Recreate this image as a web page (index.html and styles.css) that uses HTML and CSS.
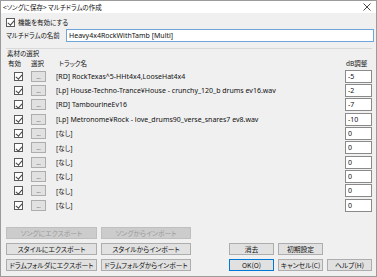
FILE: index.html
```html
<!DOCTYPE html>
<html lang="ja">
<head>
    <meta charset="UTF-8">
    <title>マルチドラムの作成</title>
    <link rel="stylesheet" href="styles.css">
</head>
<body>
<div class="window">
    <div class="titlebar">
        <span class="ja">&lt;ソングに保存&gt; マルチドラムの作成</span>
        <svg class="close" width="8" height="8" viewBox="0 0 8 8"><path d="M0.5 0.5L7.5 7.5M7.5 0.5L0.5 7.5" stroke="#333" stroke-width="0.9"/></svg>
    </div>

    <div class="content">
        <div class="enable-row">
            <span class="check"></span>
            <span class="ja">機能を有効にする</span>
        </div>

        <div class="name-row">
            <span class="ja name-label">マルチドラムの名前</span>
            <input class="name-input" type="text" value="Heavy4x4RockWithTamb [Multi]">
        </div>

        <div class="group">
            <div class="group-title ja">素材の選択</div>

            <div class="track-head">
                <span class="ja head-use">有効</span>
                <span class="ja">選択</span>
                <span class="ja head-name">トラック名</span>
                <span class="ja head-db">dB調整</span>
            </div>

            <div class="tracks">
                <div class="track"><span class="check"></span><button class="pick">...</button><span class="track-name">[RD] RockTexas^5-HHt4x4,LooseHat4x4</span><input class="db" type="text" value="-5"></div>
                <div class="track"><span class="check"></span><button class="pick">...</button><span class="track-name">[Lp] House-Techno-Trance¥House - crunchy_120_b drums ev16.wav</span><input class="db" type="text" value="-2"></div>
                <div class="track"><span class="check"></span><button class="pick">...</button><span class="track-name">[RD] TambourineEv16</span><input class="db" type="text" value="-7"></div>
                <div class="track"><span class="check"></span><button class="pick">...</button><span class="track-name">[Lp] Metronome¥Rock - love_drums90_verse_snares7 ev8.wav</span><input class="db" type="text" value="-10"></div>
                <div class="track"><span class="check"></span><button class="pick">...</button><span class="track-name">[<span class="ja">なし</span>]</span><input class="db" type="text" value="0"></div>
                <div class="track"><span class="check"></span><button class="pick">...</button><span class="track-name">[<span class="ja">なし</span>]</span><input class="db" type="text" value="0"></div>
                <div class="track"><span class="check"></span><button class="pick">...</button><span class="track-name">[<span class="ja">なし</span>]</span><input class="db" type="text" value="0"></div>
                <div class="track"><span class="check"></span><button class="pick">...</button><span class="track-name">[<span class="ja">なし</span>]</span><input class="db" type="text" value="0"></div>
                <div class="track"><span class="check"></span><button class="pick">...</button><span class="track-name">[<span class="ja">なし</span>]</span><input class="db" type="text" value="0"></div>
                <div class="track"><span class="check"></span><button class="pick">...</button><span class="track-name">[<span class="ja">なし</span>]</span><input class="db" type="text" value="0"></div>
            </div>
        </div>

        <div class="actions">
            <button class="btn" disabled>ソングにエクスポート</button>
            <button class="btn" disabled>ソングからインポート</button>
            <span></span><span></span><span></span><span></span>

            <button class="btn">スタイルにエクスポート</button>
            <button class="btn">スタイルからインポート</button>
            <span></span>
            <button class="btn">消去</button>
            <button class="btn">初期設定</button>
            <span></span>

            <button class="btn">ドラムフォルダにエクスポート</button>
            <button class="btn">ドラムフォルダからインポート</button>
            <span></span>
            <button class="btn btn-default">OK(O)</button>
            <button class="btn">キャンセル(C)</button>
            <button class="btn">ヘルプ(H)</button>
        </div>
    </div>
</div>
</body>
</html>
```

FILE: styles.css
```css
/* Reset */
* {
  box-sizing: border-box;
  margin: 0;
  padding: 0;
}

body {
  font-family: "Noto Sans", "Noto Sans CJK JP", sans-serif;
  font-size: 7px;
  color: #111;
  background: #fff;
}

.ja {
  font-family: "Noto Sans CJK JP", sans-serif;
  font-size: 6.5px;
  font-feature-settings: "palt";
}

/* Dialog window */
.window {
  width: 377px;
  height: 277px;
  border: 1px solid #9b9b9b;
  background: #f0f0f0;
}

.titlebar {
  height: 12px;
  background: #fff;
  display: flex;
  align-items: center;
  justify-content: space-between;
  padding: 0 5px 0 2px;
  line-height: 12px;
}

.content {
  padding: 0 4px 0 5px;
}

/* Checkbox */
.check {
  position: relative;
  display: inline-block;
  width: 9px;
  height: 9px;
  border: 1px solid #5a5a5a;
  background: #fff;
  flex-shrink: 0;
}

.check::after {
  content: "";
  position: absolute;
  left: 2.3px;
  top: 0.4px;
  width: 2.5px;
  height: 5px;
  border: solid #444;
  border-width: 0 0.8px 0.8px 0;
  transform: rotate(40deg);
}

.enable-row {
  margin-top: 5px;
  height: 9px;
  display: flex;
  align-items: center;
  gap: 3px;
  line-height: 9px;
}

/* Name */
.name-row {
  margin-top: 2px;
  display: flex;
  align-items: center;
}

.name-label {
  width: 60px;
  line-height: 13px;
}

.name-input {
  flex: 1;
  height: 13px;
  margin-right: -2px;
  border: 1px solid #6ea6dc;
  background: #fff;
  padding: 0 2px;
  font-family: "Noto Sans", sans-serif;
  font-size: 7px;
  color: #111;
  outline: none;
}

/* Group */
.group {
  margin-top: 6px;
  border-top: 1px solid #d9d9d9;
}

.group-title {
  line-height: 8px;
  padding-left: 1px;
}

.track-head,
.track {
  display: grid;
  grid-template-columns: 25px 25px 1fr 27px;
  align-items: center;
}

.track-head {
  margin-top: 2px;
  line-height: 8px;
}

.head-use {
  padding-left: 2px;
}

.head-name {
  padding-left: 3px;
}

.head-db {
  padding-left: 1px;
}

.tracks {
  margin-top: 2px;
}

.track {
  height: 14.33px;
}

.track .check {
  margin-left: 8px;
}

.pick {
  width: 15px;
  height: 11px;
  border: 1px solid #adadad;
  background: #e1e1e1;
  font-family: "Noto Sans", sans-serif;
  font-size: 5px;
  line-height: 11px;
  color: #333;
}

.track-name {
  white-space: nowrap;
  overflow: hidden;
}

.db {
  width: 27px;
  height: 13px;
  border: 1px solid #8a8a8a;
  background: #fff;
  padding: 0 2px;
  font-family: "Noto Sans", sans-serif;
  font-size: 7px;
  color: #111;
  outline: none;
}

/* Buttons */
.actions {
  margin-top: 15px;
  display: grid;
  grid-template-columns: 91px 90px 30px 45px 45px 45px;
  grid-auto-rows: 12px;
  gap: 4px;
}

.btn {
  border: 1px solid #adadad;
  background: #e1e1e1;
  font-family: "Noto Sans CJK JP", sans-serif;
  font-size: 6.8px;
  font-feature-settings: "palt";
  color: #111;
  line-height: 10px;
}

.btn:disabled {
  border-color: #bfbfbf;
  background: #cccccc;
  color: #9a9a9a;
}

.btn-default {
  border-color: #0078d7;
}
```
